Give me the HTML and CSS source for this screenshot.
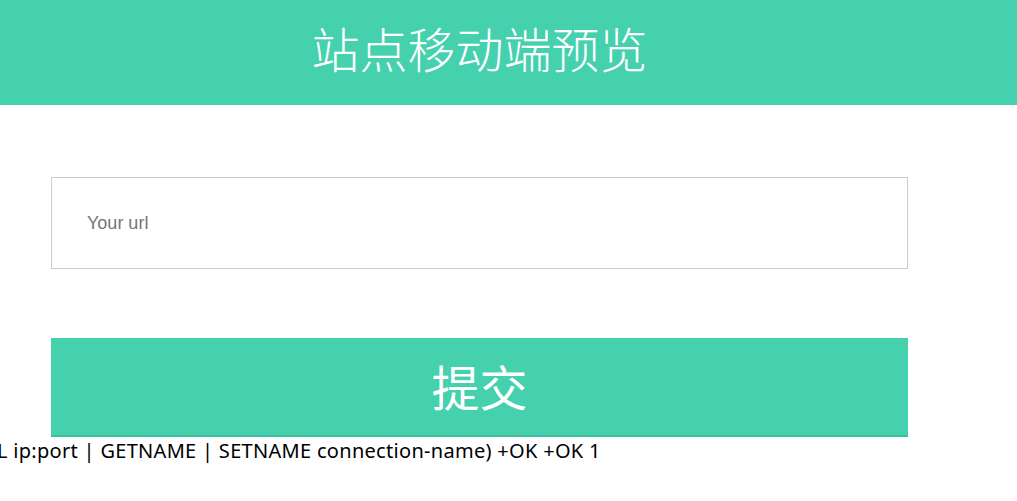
FILE: index.html
```html
<!DOCTYPE html>
<html lang="zh-CN">
<head>
<meta charset="utf-8">
<title>站点移动端预览</title>
<link rel="stylesheet" href="styles.css">
</head>
<body>
<header class="header">
  <div class="wrap">
    <h1 class="title">站点移动端预览</h1>
  </div>
</header>
<main class="wrap main">
  <form class="form">
    <input class="url" type="text" placeholder="Your url">
    <button class="submit" type="button">提交</button>
  </form>
</main>
<p class="log">L ip:port | GETNAME | SETNAME connection-name) +OK +OK 1</p>
</body>
</html>
```

FILE: styles.css
```css
html, body {
  margin: 0;
  padding: 0;
  background: #fff;
  font-family: "Noto Sans CJK SC", "Noto Sans", sans-serif;
}
.header {
  background: #45d0ae;
  height: 105px;
}
.wrap {
  width: 959px;
  box-sizing: border-box;
  padding: 0 51px;
}
.title {
  margin: 0;
  height: 105px;
  line-height: 94px;
  text-align: center;
  color: #fff;
  font-size: 48px;
  font-weight: 300;
}
.main {
  padding-top: 72px;
}
.form {
  display: flex;
  flex-direction: column;
  gap: 69px;
}
.url {
  display: block;
  width: 100%;
  height: 92px;
  box-sizing: border-box;
  border: 1px solid #cccccc;
  padding: 0 35px;
  font-family: "Liberation Sans", Arial, sans-serif;
  font-size: 18px;
  color: #333;
  outline: none;
}
.url::placeholder {
  color: #757575;
}
.submit {
  display: block;
  width: 100%;
  height: 99px;
  box-sizing: border-box;
  border: none;
  border-bottom: 2px solid #3bbf9f;
  background: #45d0ae;
  color: #fff;
  font-family: "Noto Sans CJK SC", sans-serif;
  font-size: 48px;
  padding: 0 0 4px;
}
.log {
  margin: 0;
  padding-top: 1px;
  font-family: "Noto Sans", "Noto Sans CJK SC", sans-serif;
  font-size: 20px;
  line-height: 26px;
  letter-spacing: 0.3px;
  color: #000;
  text-indent: -3px;
  white-space: nowrap;
}
```
